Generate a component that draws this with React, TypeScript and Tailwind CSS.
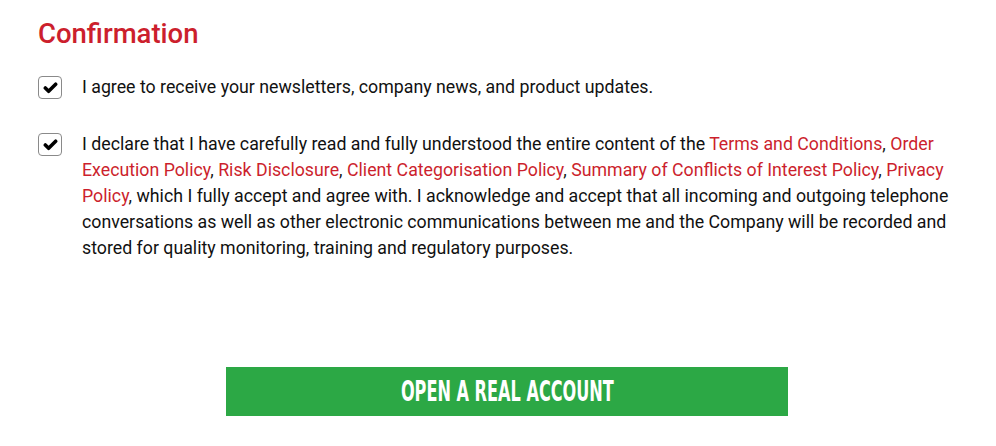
export default function App() {
  const link = 'text-[#cc1f2d]';
  return (
    <div className="min-h-screen bg-white pl-[38px] pr-[40px] pt-[16px] font-['Roboto',sans-serif]">
      <h1 className="text-[27.5px] leading-[36px] font-medium text-[#cc1f2d]">Confirmation</h1>

      <div className="mt-[22px] flex gap-[20px]">
        <Check />
        <p className="text-[17.75px] leading-[26px] text-[#111]">
          I agree to receive your newsletters, company news, and product updates.
        </p>
      </div>

      <div className="mt-[31px] flex gap-[20px]">
        <Check />
        <p className="text-[17.75px] leading-[26px] text-[#111] w-[876px]">
          I declare that I have carefully read and fully understood the entire content of the{' '}
          <span className={link}>Terms and Conditions</span>, <span className={link}>Order Execution Policy</span>,{' '}
          <span className={link}>Risk Disclosure</span>, <span className={link}>Client Categorisation Policy</span>,{' '}
          <span className={link}>Summary of Conflicts of Interest Policy</span>, <span className={link}>Privacy Policy</span>,
          which I fully accept and agree with. I acknowledge and accept that all incoming and outgoing telephone
          conversations as well as other electronic communications between me and the Company will be recorded and
          stored for quality monitoring, training and regulatory purposes.
        </p>
      </div>

      <div className="mt-[106px] pl-[188px]">
        <button className="w-[562px] h-[49px] bg-[#2ca845] text-white flex items-center justify-center">
          <span className="font-['DejaVu_Sans_Condensed',sans-serif] font-bold text-[28px] leading-none inline-block scale-x-[0.64]">
            OPEN A REAL ACCOUNT
          </span>
        </button>
      </div>
    </div>
  );
}

function Check() {
  return (
    <div className="mt-[2px] w-[24px] h-[23px] shrink-0 rounded-[4px] border border-[#8a8a8a] bg-white flex items-center justify-center">
      <svg viewBox="0 0 16 16" className="w-[15px] h-[15px]">
        <path d="M2.5 8.5 L6 12 L13.5 4.5" fill="none" stroke="#000" strokeWidth="3.8" strokeLinecap="round" strokeLinejoin="round" />
      </svg>
    </div>
  );
}
